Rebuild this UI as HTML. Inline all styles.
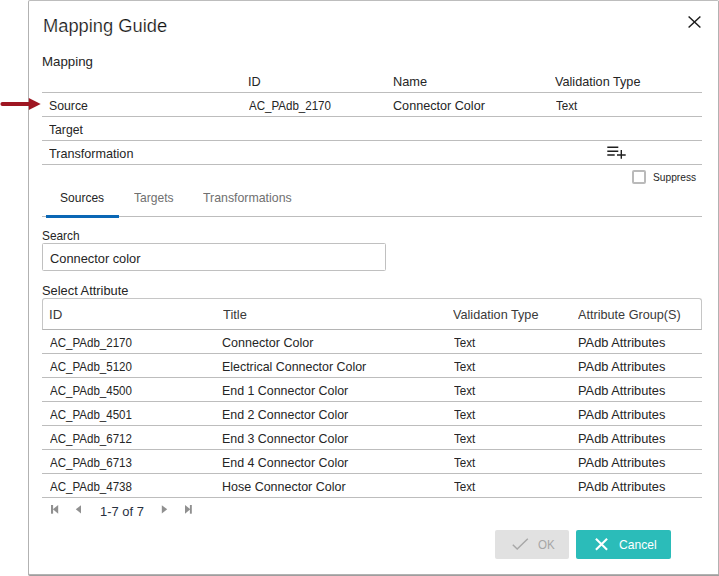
<!DOCTYPE html>
<html><head><meta charset="utf-8">
<title>Mapping Guide</title>
<style>
*{box-sizing:border-box;margin:0;padding:0}
html,body{width:719px;height:576px;overflow:hidden;background:#fff}
body{font-family:"Liberation Sans",sans-serif;font-size:13px;color:#252525;position:relative}
.dlg{position:absolute;left:28px;top:0;width:691px;height:575px;border:1px solid #b2b2b2;border-top-color:#bdbdbd;border-radius:2px;background:#fff;box-shadow:0 1px 0 #9e9e9e,1px 1px 0 #9e9e9e}
.t{position:absolute;white-space:nowrap;line-height:20px;height:20px;transform-origin:0 0}
.hl{position:absolute;height:1px;background:#bdbdbd;left:42px;width:660px}
svg{position:absolute;overflow:visible}
</style></head><body>
<div class="dlg"></div>

<!-- close -->
<svg style="left:688px;top:16px" width="13" height="12" viewBox="0 0 13 12"><path d="M0.6 0.5L12.4 11.5M12.4 0.5L0.6 11.5" stroke="#1e1e1e" stroke-width="1.5" fill="none"/></svg>

<!-- mapping grid lines -->
<div class="hl" style="top:92px"></div>
<div class="hl" style="top:116px"></div>
<div class="hl" style="top:140px"></div>
<div class="hl" style="top:164px"></div>

<!-- arrow -->
<svg style="left:0;top:96px" width="42" height="16" viewBox="0 0 42 16"><path d="M2.4 8H30" stroke="#9e1622" stroke-width="4" stroke-linecap="round" fill="none"/><path d="M28.8 1.9L40.7 8L28.8 14.1Z" fill="#9e1622"/></svg>

<!-- add-list icon -->
<svg style="left:607px;top:145px" width="20" height="15" viewBox="0 0 20 15"><path d="M0.3 2.3H11.3M0.3 6.3H11.3M0.3 10H7.7" stroke="#1e1e1e" stroke-width="1.4" fill="none"/><path d="M14.3 5V13.7M10 10H18.7" stroke="#1e1e1e" stroke-width="1.4" fill="none"/></svg>

<!-- checkbox -->
<div style="position:absolute;left:632px;top:170px;width:14px;height:14px;border:2px solid #bababa;border-radius:2px;background:#fff"></div>

<!-- tabs -->
<div class="hl" style="top:216px"></div>
<div style="position:absolute;left:46px;top:215px;width:73px;height:3px;background:#0a67b5"></div>

<!-- search -->
<div style="position:absolute;left:42px;top:243px;width:344px;height:28px;border:1px solid #c0c0c0;border-radius:1.5px"></div>

<!-- table header -->
<div style="position:absolute;left:42px;top:298px;width:660px;height:32px;border:1px solid #c6c6c6;border-bottom-color:#b4b4b4;border-radius:3px 3px 0 0"></div>

<!-- row lines -->
<div class="hl" style="top:353px"></div>
<div class="hl" style="top:377px"></div>
<div class="hl" style="top:401px"></div>
<div class="hl" style="top:425px"></div>
<div class="hl" style="top:449px"></div>
<div class="hl" style="top:473px"></div>
<div class="hl" style="top:497px"></div>

<!-- pager -->
<svg style="left:50px;top:505px" width="150" height="10" viewBox="0 0 150 10" fill="#909090">
<rect x="1" y="0" width="2.1" height="8.7"/><path d="M8.2 0V8.7L2.9 4.35Z"/>
<path d="M31 0.2V8.5L25.8 4.35Z"/>
<path d="M111.8 0.2V8.5L117.2 4.35Z"/>
<path d="M135 0V8.7L140.3 4.35Z"/><rect x="139.9" y="0" width="1.9" height="8.7"/>
</svg>

<!-- buttons -->
<div style="position:absolute;left:495px;top:530px;width:74px;height:29px;background:#e1e1e1;border-radius:2px"></div>
<svg style="left:512px;top:538px" width="17" height="12" viewBox="0 0 17 12"><path d="M0.8 6.8L5.2 11L15.8 0.8" stroke="#a8a8a8" stroke-width="1.5" fill="none"/></svg>
<div style="position:absolute;left:576px;top:530px;width:95px;height:29px;background:#2bbcb9;border-radius:2px"></div>
<svg style="left:595px;top:538px" width="13" height="12.5" viewBox="0 0 13 12.5"><path d="M0.9 0.7L12.1 11.8M12.1 0.7L0.9 11.8" stroke="#fff" stroke-width="2.1" fill="none"/></svg>

<div class="t" style="left:42.87px;top:15.80px;font-size:18px;color:#141414;transform:scaleX(1.0171);-webkit-text-stroke:0.22px #fff">Mapping Guide</div>
<div class="t" style="left:41.98px;top:51.70px;font-size:13px;color:#252525;transform:scaleX(1.0208)">Mapping</div>
<div class="t" style="left:248.28px;top:72.00px;font-size:13px;color:#252525;transform:scaleX(0.9778)">ID</div>
<div class="t" style="left:393.02px;top:72.00px;font-size:13px;color:#252525;transform:scaleX(0.9848)">Name</div>
<div class="t" style="left:555.26px;top:72.00px;font-size:13px;color:#252525;transform:scaleX(0.9741)">Validation Type</div>
<div class="t" style="left:48.79px;top:96.00px;font-size:13px;color:#252525;transform:scaleX(0.9434)">Source</div>
<div class="t" style="left:249.00px;top:96.00px;font-size:13px;color:#252525;transform:scaleX(0.8883)">AC_PAdb_2170</div>
<div class="t" style="left:392.77px;top:96.00px;font-size:13px;color:#252525;transform:scaleX(0.9707)">Connector Color</div>
<div class="t" style="left:555.78px;top:96.00px;font-size:13px;color:#252525;transform:scaleX(0.8936)">Text</div>
<div class="t" style="left:49.27px;top:120.00px;font-size:13px;color:#252525;transform:scaleX(0.9371)">Target</div>
<div class="t" style="left:49.26px;top:144.00px;font-size:13px;color:#252525;transform:scaleX(0.9708)">Transformation</div>
<div class="t" style="left:652.86px;top:167.00px;font-size:11.5px;color:#252525;transform:scaleX(0.8880)">Suppress</div>
<div class="t" style="left:60.31px;top:188.00px;font-size:13px;color:#252525;transform:scaleX(0.9247)">Sources</div>
<div class="t" style="left:133.77px;top:188.00px;font-size:13px;color:#707070;transform:scaleX(0.9286)">Targets</div>
<div class="t" style="left:202.76px;top:188.00px;font-size:13px;color:#707070;transform:scaleX(0.9488)">Transformations</div>
<div class="t" style="left:42.32px;top:226.00px;font-size:13px;color:#252525;transform:scaleX(0.9114)">Search</div>
<div class="t" style="left:49.76px;top:249.00px;font-size:13px;color:#252525;transform:scaleX(0.9862)">Connector color</div>
<div class="t" style="left:42.26px;top:280.50px;font-size:13px;color:#252525;transform:scaleX(0.9884)">Select Attribute</div>
<div class="t" style="left:48.72px;top:304.70px;font-size:13px;color:#3a3a3a;transform:scaleX(1.0222)">ID</div>
<div class="t" style="left:222.75px;top:304.70px;font-size:13px;color:#3a3a3a;transform:scaleX(0.9892)">Title</div>
<div class="t" style="left:453.26px;top:304.70px;font-size:13px;color:#3a3a3a;transform:scaleX(0.9741)">Validation Type</div>
<div class="t" style="left:577.50px;top:304.70px;font-size:13px;color:#3a3a3a;transform:scaleX(0.9737)">Attribute Group(S)</div>
<div class="t" style="left:100.44px;top:502.00px;font-size:13.5px;color:#28303f;transform:scaleX(0.9591)">1-7 of 7</div>
<div class="t" style="left:538.26px;top:534.60px;font-size:13px;color:#a6a6a6;transform:scaleX(0.8889)">OK</div>
<div class="t" style="left:619.30px;top:534.60px;font-size:13px;color:#ffffff;transform:scaleX(0.9290)">Cancel</div>
<div class="t" style="left:50.00px;top:333.00px;font-size:13px;color:#252525;transform:scaleX(0.8883)">AC_PAdb_2170</div>
<div class="t" style="left:222.28px;top:333.00px;font-size:13px;color:#252525;transform:scaleX(0.9653)">Connector Color</div>
<div class="t" style="left:454.28px;top:333.00px;font-size:13px;color:#252525;transform:scaleX(0.8936)">Text</div>
<div class="t" style="left:577.51px;top:333.00px;font-size:13px;color:#252525;transform:scaleX(0.9857)">PAdb Attributes</div>
<div class="t" style="left:50.00px;top:357.00px;font-size:13px;color:#252525;transform:scaleX(0.8883)">AC_PAdb_5120</div>
<div class="t" style="left:222.05px;top:357.00px;font-size:13px;color:#252525;transform:scaleX(0.9549)">Electrical Connector Color</div>
<div class="t" style="left:454.28px;top:357.00px;font-size:13px;color:#252525;transform:scaleX(0.8936)">Text</div>
<div class="t" style="left:577.51px;top:357.00px;font-size:13px;color:#252525;transform:scaleX(0.9857)">PAdb Attributes</div>
<div class="t" style="left:50.00px;top:381.00px;font-size:13px;color:#252525;transform:scaleX(0.8883)">AC_PAdb_4500</div>
<div class="t" style="left:222.05px;top:381.00px;font-size:13px;color:#252525;transform:scaleX(0.9542)">End 1 Connector Color</div>
<div class="t" style="left:454.28px;top:381.00px;font-size:13px;color:#252525;transform:scaleX(0.8936)">Text</div>
<div class="t" style="left:577.51px;top:381.00px;font-size:13px;color:#252525;transform:scaleX(0.9857)">PAdb Attributes</div>
<div class="t" style="left:50.00px;top:405.00px;font-size:13px;color:#252525;transform:scaleX(0.8883)">AC_PAdb_4501</div>
<div class="t" style="left:222.05px;top:405.00px;font-size:13px;color:#252525;transform:scaleX(0.9542)">End 2 Connector Color</div>
<div class="t" style="left:454.28px;top:405.00px;font-size:13px;color:#252525;transform:scaleX(0.8936)">Text</div>
<div class="t" style="left:577.51px;top:405.00px;font-size:13px;color:#252525;transform:scaleX(0.9857)">PAdb Attributes</div>
<div class="t" style="left:50.00px;top:429.00px;font-size:13px;color:#252525;transform:scaleX(0.8883)">AC_PAdb_6712</div>
<div class="t" style="left:222.05px;top:429.00px;font-size:13px;color:#252525;transform:scaleX(0.9542)">End 3 Connector Color</div>
<div class="t" style="left:454.28px;top:429.00px;font-size:13px;color:#252525;transform:scaleX(0.8936)">Text</div>
<div class="t" style="left:577.51px;top:429.00px;font-size:13px;color:#252525;transform:scaleX(0.9857)">PAdb Attributes</div>
<div class="t" style="left:50.00px;top:453.00px;font-size:13px;color:#252525;transform:scaleX(0.8883)">AC_PAdb_6713</div>
<div class="t" style="left:222.05px;top:453.00px;font-size:13px;color:#252525;transform:scaleX(0.9542)">End 4 Connector Color</div>
<div class="t" style="left:454.28px;top:453.00px;font-size:13px;color:#252525;transform:scaleX(0.8936)">Text</div>
<div class="t" style="left:577.51px;top:453.00px;font-size:13px;color:#252525;transform:scaleX(0.9857)">PAdb Attributes</div>
<div class="t" style="left:50.00px;top:477.00px;font-size:13px;color:#252525;transform:scaleX(0.8883)">AC_PAdb_4738</div>
<div class="t" style="left:222.04px;top:477.00px;font-size:13px;color:#252525;transform:scaleX(0.9608)">Hose Connector Color</div>
<div class="t" style="left:454.28px;top:477.00px;font-size:13px;color:#252525;transform:scaleX(0.8936)">Text</div>
<div class="t" style="left:577.51px;top:477.00px;font-size:13px;color:#252525;transform:scaleX(0.9857)">PAdb Attributes</div>
</body></html>
